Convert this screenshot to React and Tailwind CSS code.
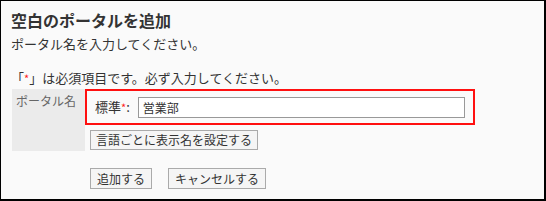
export default function App() {
  const font = { fontFamily: '"Noto Sans CJK JP", "Noto Sans", sans-serif' };
  return (
    <div
      className="w-[546px] h-[201px] box-border bg-[#fafafa] border-l border-t border-r-2 border-b-2 border-black text-[#333] overflow-hidden"
      style={font}
    >
      <div className="pl-[10px] pt-[9px]">
        <h1 className="text-[16px] leading-[20px] font-bold text-[#333]">空白のポータルを追加</h1>
        <p className="mt-[5px] text-[13px] leading-[18px]">ポータル名を入力してください。</p>
        <p className="mt-[16px] text-[13px] leading-[18px]">
          「<span className="text-[#ff2020] text-[11px]">*</span>」は必須項目です。必ず入力してください。
        </p>
        <div className="mt-[2px] flex">
          <div className="w-[73px] ml-[1px] h-[62px] bg-[#ebebeb] text-[12px] leading-[17px] text-[#666] pl-[4px] pt-[3px]">
            ポータル名
          </div>
          <div className="flex flex-col">
            <div className="w-[390px] h-[36px] box-border border-[2.5px] border-[#ff1010] flex items-center pl-[8px]">
              <span className="text-[13px] leading-[18px] text-[#333]">
                標準<span className="text-[#ff2020] text-[11px]">*</span>:
              </span>
              <div className="ml-[8px] w-[327px] h-[21px] box-border border border-[#999] bg-white text-[12px] leading-[19px] pl-[4px] text-[#333]">
                営業部
              </div>
            </div>
            <div className="ml-[5px] mt-[1px]">
              <button className="h-[20px] box-border border border-[#aaa] bg-[#f5f5f5] px-[5px] text-[12px] leading-[18px] text-[#333]">
                言語ごとに表示名を設定する
              </button>
            </div>
          </div>
        </div>
        <div className="mt-[17px] ml-[79px] flex gap-[16px]">
          <button className="h-[21px] box-border border border-[#aaa] bg-[#f5f5f5] px-[6px] text-[12px] leading-[19px] text-[#333]">
            追加する
          </button>
          <button className="h-[21px] box-border border border-[#aaa] bg-[#f5f5f5] px-[6px] text-[12px] leading-[19px] text-[#333]">
            キャンセルする
          </button>
        </div>
      </div>
    </div>
  );
}
